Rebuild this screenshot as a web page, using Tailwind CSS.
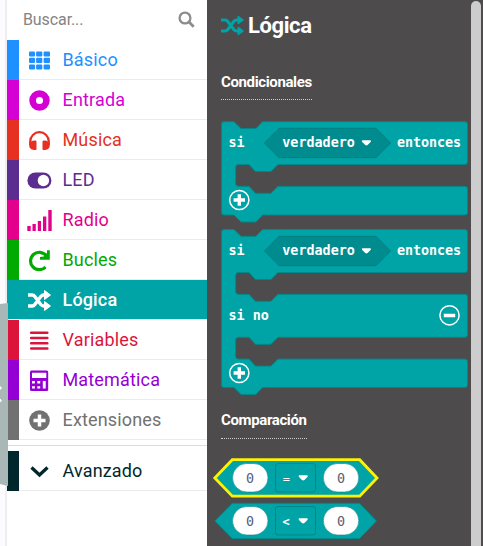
<!DOCTYPE html>
<html lang="es">
<head>
<meta charset="utf-8">
<title>Lógica</title>
<script src="https://cdn.jsdelivr.net/npm/@tailwindcss/browser@4"></script>
</head>
<body class="w-[483px] h-[546px] overflow-hidden bg-[#fcfcff] font-[Roboto,sans-serif]">
<div class="relative flex h-[546px] w-[483px]">
  <div class="w-[7px] shrink-0 border-r-2 border-[#eeeeee]"></div>
  <aside class="w-[200px] shrink-0 bg-white text-[18px]">
    <div class="flex h-10 items-center justify-between pl-4 pr-[12.500px] text-[16px] tracking-[-0.1px] text-[#848484]">
      <span>Buscar...</span>
      <svg class="mb-px" width="17" height="17" viewBox="0 0 17 17" fill="none" stroke="#8c8c8c" stroke-width="2.300"><circle cx="7" cy="7" r="5.400"/><path d="M10.800 10.800L15.700 15.700" stroke-width="2.800"/></svg>
    </div>
    <nav class="tracking-[0.16px]">
      <div class="flex h-10 text-[#1e90ff]"><i class="w-3 bg-[#1e90ff]"></i><div class="flex flex-1 items-center border-b border-[#ebebeb] pl-2"><svg class="mr-[10.500px]" width="25" height="24" fill="currentColor"><rect x="2" y="3.500" width="6" height="5" rx="1"/><rect x="9.100" y="3.500" width="6.200" height="5" rx="1"/><rect x="16.600" y="3.500" width="6.400" height="5" rx="1"/><rect x="2" y="9.700" width="6" height="5.300" rx="1"/><rect x="9.100" y="9.700" width="6.200" height="5.300" rx="1"/><rect x="16.600" y="9.700" width="6.400" height="5.300" rx="1"/><rect x="2" y="16.400" width="6" height="5.100" rx="1"/><rect x="9.100" y="16.400" width="6.200" height="5.100" rx="1"/><rect x="16.600" y="16.400" width="6.400" height="5.100" rx="1"/></svg><span>Básico</span></div></div>
      <div class="flex h-10 text-[#d400d4]"><i class="w-3 bg-[#d400d4]"></i><div class="flex flex-1 items-center border-b border-[#ebebeb] pl-2"><svg class="mr-[10.500px]" width="25" height="24" fill="none" stroke="currentColor" stroke-width="6.700"><circle cx="12.500" cy="12.500" r="6.900"/></svg><span>Entrada</span></div></div>
      <div class="flex h-10 text-[#e63022]"><i class="w-3 bg-[#e63022]"></i><div class="flex flex-1 items-center border-b border-[#ebebeb] pl-2"><svg class="mr-[10.500px]" width="25" height="24" fill="currentColor"><path d="M3.200 17v-3.500a9.300 9.300 0 0 1 18.600 0V17" fill="none" stroke="currentColor" stroke-width="2.200"/><path d="M7 12.500h1.200q1.300 0 1.300 1.200v7.200q0 1.200-1.300 1.200H7q-4.800-.6-4.800-4.800T7 12.500zM18 12.500h-1.200q-1.300 0-1.300 1.200v7.200q0 1.200 1.300 1.200H18q4.800-.6 4.800-4.800T18 12.500z"/></svg><span>Música</span></div></div>
      <div class="flex h-10 text-[#5c2d91]"><i class="w-3 bg-[#5c2d91]"></i><div class="flex flex-1 items-center border-b border-[#ebebeb] pl-2"><svg class="mr-[10.500px]" width="25" height="24"><rect x=".4" y="4.500" width="24" height="16" rx="8" fill="currentColor"/><circle cx="16.400" cy="12.500" r="5.700" fill="#fff"/></svg><span>LED</span></div></div>
      <div class="flex h-10 text-[#e3008c]"><i class="w-3 bg-[#e3008c]"></i><div class="flex flex-1 items-center border-b border-[#ebebeb] pl-2"><svg class="mr-[10.500px]" width="25" height="24" fill="currentColor"><path d="M.3 18h3.400v5H.3zM5.500 16h3.300v7H5.500zM10.800 13H14v10h-3.200zM16 8.500h3.300V23H16zM21.300 2h3.400v21h-3.400z"/></svg><span>Radio</span></div></div>
      <div class="flex h-10 text-[#00aa00]"><i class="w-3 bg-[#00aa00]"></i><div class="flex flex-1 items-center border-b border-[#ebebeb] pl-2"><svg class="mr-[10.500px]" width="25" height="24"><path d="M18.500 19A8.700 8.700 0 1 1 19 7.500" fill="none" stroke="currentColor" stroke-width="3.200"/><path d="M22.800 2.300v9.400h-9.800V9l3.700-.5L20 5V2.300z" fill="currentColor"/></svg><span>Bucles</span></div></div>
      <div class="flex h-10 text-white"><div class="flex w-3 border-b border-[#ebebeb] bg-[#00a4a6]"></div><div class="flex flex-1 items-center border-b border-[#ebebeb] bg-[#00a4a6] pl-2"><svg class="mr-[10.500px]" width="25" height="24"><path d="M1 7h4.200q1.500 0 2.600 1.500l6 8Q15 18 16.800 18H19M1 18h4.200q1.500 0 2.600-1.500l6-8Q15 7 16.800 7H19" fill="none" stroke="currentColor" stroke-width="3.400"/><path d="M17.500 2.500L23.500 7l-6 4.500zM17.500 13.500l6 4.500-6 4.500z" fill="currentColor" stroke="currentColor" stroke-linejoin="round"/></svg><span class="font-medium">Lógica</span></div></div>
      <div class="flex h-10 text-[#dc143c]"><i class="w-3 bg-[#dc143c]"></i><div class="flex flex-1 items-center border-b border-[#ebebeb] pl-2"><svg class="mr-[10.500px]" width="25" height="24" stroke="currentColor" stroke-width="2.600" stroke-linecap="round"><path d="M4.200 4.800h16.100M4.200 10h16.100M4.200 15.300h16.100M4.200 20.500h16.100"/></svg><span>Variables</span></div></div>
      <div class="flex h-10 text-[#9400d3]"><i class="w-3 bg-[#9400d3]"></i><div class="flex flex-1 items-center border-b border-[#ebebeb] pl-2"><svg class="mr-[10.500px]" width="25" height="24"><rect x="3" y="2.500" width="18.200" height="20.500" rx="1.500" fill="currentColor"/><path d="M5 4.700h14.300v5.300H5zM5 13h2.900v2.400H5zM10.300 13h2.900v2.400h-2.900zM5 18.200h2.900v2.400H5zM10.300 18.200h2.900v2.400h-2.900zM15.800 13h2.900v2.400h-2.900zM15.800 14h2.900v6.600h-2.900z" fill="#fff"/></svg><span>Matemática</span></div></div>
      <div class="flex h-10 text-[#717171]"><i class="w-3 bg-[#717171]"></i><div class="flex flex-1 items-center border-b border-[#ebebeb] pl-2"><svg class="mr-[10.500px]" width="25" height="24"><circle cx="12.500" cy="12.500" r="10.300" fill="currentColor"/><path d="M12.500 6.500v12M6.500 12.500h12" stroke="#fff" stroke-width="3.500"/></svg><span>Extensiones</span></div></div>
      <div class="mt-[5px] border-t border-[#dddddd] pt-[5px]"><div class="flex h-10 text-[#00272b]"><i class="w-3 bg-[#00272b]"></i><div class="flex flex-1 items-center border-b border-[#ebebeb] pl-2"><svg class="mr-[10.500px]" width="25" height="24"><path d="M4.500 8.500l8 7.500 8-7.500" fill="none" stroke="currentColor" stroke-width="3.300"/></svg><span>Avanzado</span></div></div></div>
    </nav>
  </aside>
  <main class="relative w-[276px] shrink-0 bg-[#4d4b4c] pl-[14px] text-white">
    <h1 class="flex h-[50px] items-center text-[22px] font-bold tracking-[-0.4px]"><svg class="mr-[3px] text-[#00a4a6]" width="24" height="24"><path d="M0 7h4.200q1.500 0 2.600 1.500l6 8Q14 18 15.800 18H18M0 18h4.200q1.500 0 2.600-1.500l6-8Q14 7 15.800 7H18" fill="none" stroke="currentColor" stroke-width="3"/><path d="M17 3l5.500 4-5.500 4zM17 14l5.500 4-5.500 4z" fill="currentColor" stroke="currentColor" stroke-linejoin="round"/></svg>Lógica</h1>
    <h2 class="mt-[22px] h-[28px] w-[91px] whitespace-nowrap border-b border-dotted border-[#d0d0d0] text-[15px] leading-[21px] font-bold tracking-[-0.37px]">Condicionales</h2>
    <h2 class="mt-[310px] h-[29px] w-[86px] whitespace-nowrap border-b border-dotted border-[#d0d0d0] text-[15px] leading-[21px] font-bold tracking-[-0.37px]">Comparación</h2>
    <svg class="absolute left-0 top-0 font-['DejaVu_Sans_Mono',monospace]" width="260" height="546" viewBox="207 0 260 546" overflow="visible" font-size="13.400">
      <g fill="#00a4a6" stroke="#008789" stroke-width="1" stroke-linejoin="round">
        <path d="M224 121.700H234l7 6.800h15l6.500-6.800H465q2.500 0 2.500 2.500V162q0 2.500-2.500 2.500H278l-7 7H255.500l-6.500-7H238.500q-2.800 0-2.800 2.800V183.500q0 2.800 2.800 2.800H249l6.500 7H271l7-7H465q2.500 0 2.500 2.500V212.500q0 2.500-2.500 2.500H262.500l-6.500 7H241l-7-7h-10q-2.500 0-2.500-2.500V124.200q0-2.500 2.500-2.500z"/>
        <path d="M224 229.500H234l7 6.800h15l6.500-6.800H465q2.500 0 2.500 2.500V270q0 2.500-2.500 2.500H278l-7 7H255.500l-6.500-7H238.500q-2.800 0-2.800 2.800V291.500q0 2.800 2.800 2.800H249l6.500 7H271l7-7H465q2.500 0 2.500 2.500V334.800q0 2.500-2.500 2.500H278l-7 7H255.500l-6.500-7H238.500q-2.800 0-2.800 2.800V356.300q0 2.800 2.800 2.800H249l6.500 7H271l7-7H465q2.500 0 2.500 2.500V385q0 2.500-2.500 2.500H262.500l-6.500 7H241l-7-7h-10q-2.500 0-2.500-2.500V232q0-2.500 2.500-2.500z"/>
        <path d="M264.500 143l14.500-14.700h97L390.500 143 376 157.700h-97zM264.500 251l14.500-14.700h97L390.500 251 376 265.700h-97z" fill="#008b8e" stroke="#008083"/>
        <path d="M214.800 521L232.300 503.300H359.500L376.500 521 359.500 538.700H232.300z"/>
        <path d="M214.800 478L232.300 459.700H359.700L377 478 359.700 496.200H232.300z" stroke="#fff200" stroke-width="2.800" stroke-linejoin="miter"/>
        <rect x="275.500" y="463.500" width="40" height="28.500" rx="2.500"/><rect x="275.500" y="506.500" width="40" height="28.500" rx="2.500"/>
      </g>
      <g fill="#fff" stroke="#008789" stroke-width=".6"><rect x="232.500" y="463.500" width="35.500" height="28.500" rx="14.250"/><rect x="323.300" y="463.500" width="35.500" height="28.500" rx="14.250"/><rect x="232.500" y="506.500" width="35.500" height="28.500" rx="14.250"/><rect x="323.300" y="506.500" width="35.500" height="28.500" rx="14.250"/></g>
      <g fill="#fff" font-weight="bold">
        <text x="228.500" y="147">si</text><text x="282.300" y="147">verdadero</text><text x="397" y="147" textLength="64">entonces</text>
        <text x="228.500" y="255">si</text><text x="282.300" y="255">verdadero</text><text x="397" y="255" textLength="64">entonces</text>
        <text x="228.500" y="320">si no</text>
        <text x="282.800" y="482.500" font-size="12" font-weight="normal">=</text><text x="282.500" y="525.500" font-size="12">&lt;</text>
      </g>
      <g fill="#575e75"><text x="246" y="482.500">0</text><text x="337" y="482.500">0</text><text x="246" y="525.500">0</text><text x="337" y="525.500">0</text></g>
      <path d="M362.700 140.300h7.400q1.400.4.500 1.600l-3 3.200q-1.200.9-2.400 0l-3-3.200q-.9-1.200.5-1.600zM362.700 248.300h7.400q1.400.4.500 1.600l-3 3.200q-1.200.9-2.400 0l-3-3.200q-.9-1.200.5-1.600zM299.500 475.300h7.400q1.400.4.500 1.600l-3 3.200q-1.200.9-2.400 0l-3-3.200q-.9-1.200.5-1.600zM299.500 518.300h7.400q1.400.4.500 1.600l-3 3.200q-1.200.9-2.400 0l-3-3.200q-.9-1.200.5-1.600z" fill="#fff"/>
      <g fill="#00a4a6" stroke="#fff" stroke-width="1.500"><circle cx="239.300" cy="200" r="9.600"/><circle cx="239.300" cy="373" r="9.600"/><circle cx="449.500" cy="315.300" r="9.600"/><path d="M239.300 194.300v11.400M233.600 200H245M239.300 367.300v11.400M233.600 373H245M443.800 315.500h11.400" stroke-width="3.400"/></g>
    </svg>
    <div class="absolute right-[2px] top-[1px] h-[560px] w-[10px] rounded-full bg-[#cdcdcd]"></div>
  </main>
  <svg class="absolute left-0 top-[302px]" width="8" height="185"><path d="M0 2L8 1V184L0 182z" fill="#a9b7b7"/><path d="M0 84.500l1.500 1.500L0 87.500zM0 97l1.500 1.500L0 100z" fill="#fff" stroke="#fff"/></svg>
</div>
</body>
</html>
